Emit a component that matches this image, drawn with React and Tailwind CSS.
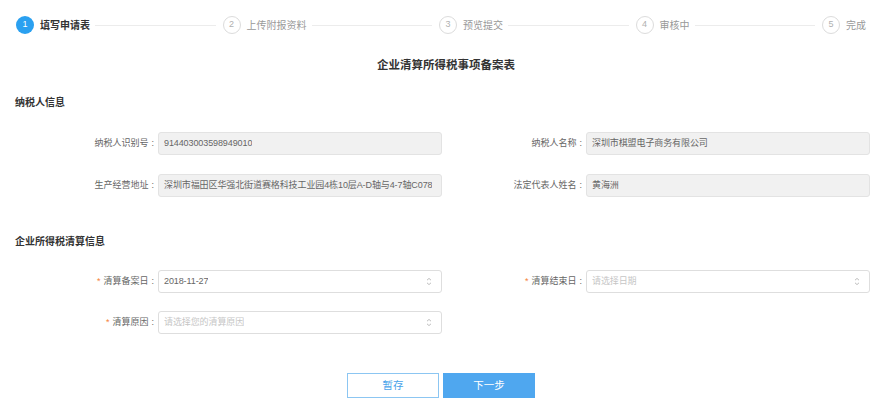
import React from "react";

const steps = ["填写申请表", "上传附报资料", "预览提交", "审核中", "完成"];

function UpDown() {
  return (
    <svg width="6" height="9" viewBox="0 0 6 9" className="shrink-0">
      <path d="M1 3.2 L3 1.4 L5 3.2" fill="none" stroke="#b5b5b5" strokeWidth="0.9" />
      <path d="M1 5.8 L3 7.6 L5 5.8" fill="none" stroke="#b5b5b5" strokeWidth="0.9" />
    </svg>
  );
}

function Field({ label, value, placeholder, disabled, required, arrow, labelW }) {
  return (
    <div className="flex items-center">
      <div
        className="flex items-center justify-end text-[9px] text-[#666] whitespace-nowrap"
        style={{ width: labelW }}
      >
        {required && <span className="text-[#f5823a] mr-[3px]">*</span>}
        {label}
        <span className="ml-[3px] mr-[4px]">:</span>
      </div>
      <div
        className={`w-[284px] h-[23px] rounded-[3px] border flex items-center px-[5px] justify-between text-[9px] ${
          disabled ? "bg-[#f1f1f1] border-[#e3e3e3] text-[#666]" : "bg-white border-[#dedede] text-[#666]"
        }`}
      >
        <span className={`whitespace-nowrap overflow-hidden tracking-[-0.1px] ${value ? "" : "text-[#c6c6c6]"}`}>{value || placeholder}</span>
        {arrow && <span className="mr-[4px]"><UpDown /></span>}
      </div>
    </div>
  );
}

export default function App() {
  return (
    <div
      className="w-[892px] h-[419px] bg-white overflow-hidden"
      style={{ fontFamily: '"Liberation Sans", "Noto Sans CJK SC", sans-serif' }}
    >
      {/* steps */}
      <div className="flex items-center pl-[16px] pr-[26px] pt-[16px] h-[34px]">
        {steps.map((s, i) => (
          <React.Fragment key={s}>
            <div className="flex items-center shrink-0">
              <div
                className={`w-[18px] h-[18px] rounded-full flex items-center justify-center text-[9px] ${
                  i === 0 ? "bg-[#2aa0f0] text-white" : "border border-[#dcdcdc] text-[#b0b0b0]"
                }`}
              >
                {i + 1}
              </div>
              <span className={`ml-[6px] text-[10px] ${i === 0 ? "text-[#333] font-semibold" : "text-[#999]"}`}>{s}</span>
            </div>
            {i < steps.length - 1 && <div className="flex-1 h-px bg-[#ececec] ml-[5px] mr-[7px]" />}
          </React.Fragment>
        ))}
      </div>

      <div className="mt-[23px] text-center text-[11.5px] leading-[16px] font-semibold text-[#333]">
        企业清算所得税事项备案表
      </div>

      <div className="mt-[23px] pl-[15px] text-[10px] leading-[14px] font-semibold text-[#333]">纳税人信息</div>

      <div className="mt-[22px] flex flex-col gap-[19px]">
        <div className="flex">
          <Field labelW="158px" label="纳税人识别号" value="914403003598949010" disabled />
          <Field labelW="144px" label="纳税人名称" value="深圳市棋盟电子商务有限公司" disabled />
        </div>
        <div className="flex">
          <Field labelW="158px" label="生产经营地址" value="深圳市福田区华强北街道赛格科技工业园4栋10层A-D轴与4-7轴C078" disabled />
          <Field labelW="144px" label="法定代表人姓名" value="黄海洲" disabled />
        </div>
      </div>

      <div className="mt-[38px] pl-[15px] text-[10px] leading-[14px] font-semibold text-[#333]">企业所得税清算信息</div>

      <div className="mt-[21px] flex flex-col gap-[18px]">
        <div className="flex">
          <Field labelW="158px" label="清算备案日" value="2018-11-27" required arrow />
          <Field labelW="144px" label="清算结束日" placeholder="请选择日期" required arrow />
        </div>
        <div className="flex">
          <Field labelW="158px" label="清算原因" placeholder="请选择您的清算原因" required arrow />
        </div>
      </div>

      <div className="mt-[39px] flex pl-[347px] gap-[4px]">
        <button className="w-[92px] h-[25px] border border-[#8cc6f2] text-[#4aa3ea] text-[10.5px] bg-white">暂存</button>
        <button className="w-[92px] h-[25px] bg-[#4fa7ef] text-white text-[10.5px]">下一步</button>
      </div>
    </div>
  );
}
